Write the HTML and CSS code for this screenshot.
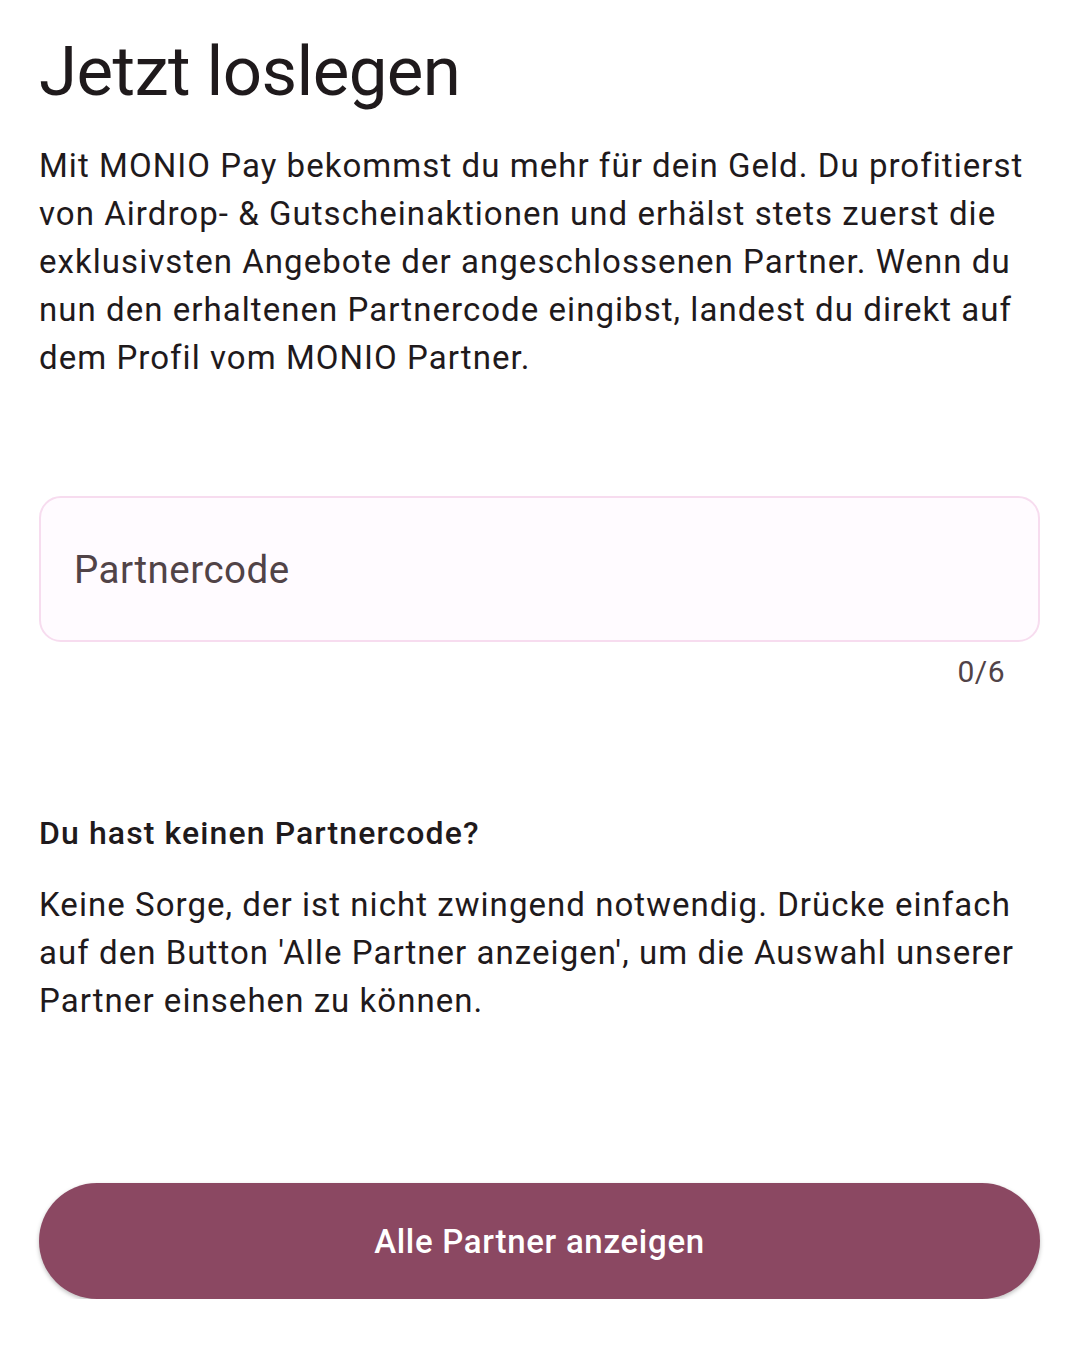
FILE: index.html
```html
<!DOCTYPE html>
<html lang="de">
<head>
    <meta charset="UTF-8">
    <meta name="viewport" content="width=device-width, initial-scale=1.0">
    <title>Jetzt loslegen</title>
    <link rel="stylesheet" href="styles.css">
</head>
<body>

    <main class="page">
        <h1 class="title">Jetzt loslegen</h1>

        <p class="intro">Mit MONIO Pay bekommst du mehr für dein Geld. Du profitierst von Airdrop- &amp; Gutscheinaktionen und erhälst stets zuerst die exklusivsten Angebote der angeschlossenen Partner. Wenn du nun den erhaltenen Partnercode eingibst, landest du direkt auf dem Profil vom MONIO Partner.</p>

        <div class="code-field">
            <label class="code-box">
                <input type="text" class="code-input" placeholder="Partnercode" maxlength="6">
            </label>
            <div class="counter">0/6</div>
        </div>

        <h2 class="subtitle">Du hast keinen Partnercode?</h2>
        <p class="hint">Keine Sorge, der ist nicht zwingend notwendig. Drücke einfach auf den Button 'Alle Partner anzeigen', um die Auswahl unserer Partner einsehen zu können.</p>

        <button class="primary-btn">Alle Partner anzeigen</button>
    </main>

</body>
</html>
```

FILE: styles.css
```css
body {
    margin: 0;
    background-color: #ffffff;
    font-family: Roboto, "Noto Sans", sans-serif;
    color: #1f1a1c;
}
.page {
    padding: 28px 40px 0 39px;
    display: flex;
    flex-direction: column;
}
.title {
    margin: 0;
    font-size: 69px;
    font-weight: 400;
    line-height: 88px;
    letter-spacing: -0.6px;
}
.intro, .hint {
    margin: 0;
    font-size: 33px;
    line-height: 48px;
    letter-spacing: 1.05px;
}
.intro {
    margin-top: 26px;
}
.code-field {
    margin-top: 114px;
    display: flex;
    flex-direction: column;
}
.code-box {
    display: flex;
    align-items: center;
    height: 146px;
    box-sizing: border-box;
    border: 2px solid #f7dcef;
    border-radius: 22px;
    background-color: #fffbff;
    padding: 0 33px;
}
.code-input {
    width: 100%;
    border: none;
    outline: none;
    background: transparent;
    font-family: inherit;
    font-size: 38.5px;
    letter-spacing: 0.5px;
    color: #1f1a1c;
    padding: 0;
}
.code-input::placeholder {
    color: #514347;
}
.counter {
    align-self: flex-end;
    margin-top: 10px;
    padding-right: 35px;
    font-size: 30px;
    line-height: 40px;
    letter-spacing: 0.5px;
    color: #514347;
}
.subtitle {
    margin: 117px 0 0 0;
    font-size: 32px;
    font-weight: 500;
    line-height: 48px;
    letter-spacing: 1.1px;
}
.hint {
    margin-top: 24px;
}
.primary-btn {
    margin-top: 158px;
    height: 116px;
    border: none;
    border-radius: 58px;
    background-color: #8b4862;
    color: #ffffff;
    font-family: inherit;
    font-size: 33px;
    font-weight: 500;
    letter-spacing: 0.7px;
    box-shadow: 0 2px 4px rgba(0, 0, 0, 0.25);
    cursor: pointer;
}
```
